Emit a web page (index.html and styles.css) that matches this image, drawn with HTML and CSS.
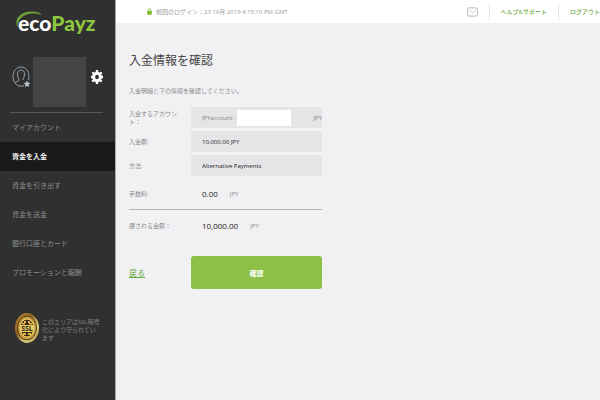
FILE: index.html
```html
<!DOCTYPE html>
<html lang="ja">
<head>
  <meta charset="UTF-8">
  <title>ecoPayz</title>
  <link rel="stylesheet" href="styles.css">
</head>
<body>

  <aside class="sidebar">
    <a href="#" class="logo">
      <svg class="swoosh" viewBox="0 0 32 18" aria-hidden="true">
        <path d="M2.500 17 C-2 7 7 0.500 16 0.500 C21 0.500 25 1.500 27 4 C21 1.500 11 1.500 6 7 C3 10 2 13 2.500 17Z" fill="#6fa332"/>
      </svg>
      <span class="eco">eco</span><span class="payz">Payz</span>
    </a>

    <div class="profile">
      <svg class="user-icon" viewBox="0 0 19 22" fill="none" stroke="#93a0aa" stroke-width="1" aria-hidden="true">
        <path d="M12 19.600 C6 22 1 17 1 10.500 C1 5 4.500 1 9 1 C13.500 1 17 5 17 10.500 C17 12 16.800 13 16.400 14"/>
        <path d="M3.500 17 C4 15 7 15.500 7 14 C7 12.500 5.500 11 5.500 8 C5.500 5.500 7 4 9 4 C11 4 12.500 5.500 12.500 8 C12.500 11 11 12.500 11 14"/>
        <path d="M15 14.500 L16 16.600 L18.400 16.900 L16.700 18.600 L17.100 21 L15 19.900 L12.900 21 L13.300 18.600 L11.600 16.900 L14 16.600Z" fill="#b4c2cc" stroke="none"/>
      </svg>
      <div class="avatar"></div>
      <a href="#" class="settings" aria-label="設定">
        <svg viewBox="0 0 12 14">
          <g fill="#fff">
            <ellipse cx="6" cy="7" rx="4.600" ry="5.400"/>
            <rect x="4.800" y="0" width="2.400" height="14" rx="0.600"/>
            <rect x="0" y="5.600" width="12" height="2.800" rx="0.600"/>
            <rect x="4.800" y="0.400" width="2.400" height="13.200" rx="0.600" transform="rotate(45 6 7)"/>
            <rect x="4.800" y="0.400" width="2.400" height="13.200" rx="0.600" transform="rotate(-45 6 7)"/>
          </g>
          <ellipse cx="6" cy="7" rx="1.900" ry="2.300" fill="#303030"/>
        </svg>
      </a>
    </div>

    <nav class="menu">
      <a href="#">マイアカウント</a>
      <a href="#" class="active">資金を入金</a>
      <a href="#">資金を引き出す</a>
      <a href="#">資金を送金</a>
      <a href="#">銀行口座とカード</a>
      <a href="#">プロモーションと報酬</a>
    </nav>

    <div class="secure">
      <svg class="seal" viewBox="0 0 24 30" aria-hidden="true">
        <defs>
          <linearGradient id="gold" x1="0" y1="0" x2="1" y2="1">
            <stop offset="0" stop-color="#c98a35"/>
            <stop offset="0.400" stop-color="#8a621f"/>
            <stop offset="0.700" stop-color="#eadb83"/>
            <stop offset="1" stop-color="#9b7630"/>
          </linearGradient>
        </defs>
        <ellipse cx="12" cy="15" rx="12" ry="15" fill="url(#gold)"/>
        <ellipse cx="12" cy="15" rx="9.500" ry="12" fill="#c99a3b" stroke="#4b3a1c" stroke-width="1"/>
        <ellipse cx="12" cy="15" rx="7" ry="9" fill="#3a2f1a" stroke="#f3dc77" stroke-width="1"/>
        <path d="M9 8h2v2h-2zM13 8h2v2h-2zM7 10h3v1.500h-3zM14 10h3v1.500h-3zM8 20h3v2h-3zM13 20h3v2h-3z" fill="#f0b53c"/>
        <rect x="5" y="12" width="14" height="7" fill="#e5cb62"/>
        <text x="12" y="18" class="seal-text">SSL</text>
      </svg>
      <p>このエリアはSSL暗号化により守られています</p>
    </div>
  </aside>

  <div class="page">
    <header class="topbar">
      <div class="last-login">
        <svg viewBox="0 0 5 7" aria-hidden="true">
          <path d="M1.200 3.500V2a1.300 1.300 0 0 1 2.600 0v1.500" fill="none" stroke="#8dc049" stroke-width="0.900"/>
          <rect x="0.200" y="3" width="4.600" height="3.800" rx="0.500" fill="#7dbb2f"/>
        </svg>
        <span>前回のログイン：23 10月 2019 4:15:10 PM GMT</span>
      </div>
      <div class="top-links">
        <a href="#" class="mail" aria-label="メール">
          <svg viewBox="0 0 11 10" fill="none" stroke="#b9b9b9">
            <rect x="0.600" y="0.900" width="9.800" height="8.200" rx="1.200"/>
            <path d="M2 3 L5.500 6 L9 3" stroke-width="0.700"/>
          </svg>
        </a>
        <a href="#" class="help">ヘルプ&amp;サポート</a>
        <a href="#" class="logout">ログアウト</a>
      </div>
    </header>

    <main class="content">
      <h1>入金情報を確認</h1>
      <p class="intro">入金明細と下の情報を確認してください。</p>

      <form class="confirm">
        <div class="row">
          <label for="account">入金するアカウント：</label>
          <div class="field account">
            <input type="text" id="account" value="JPYaccount -" readonly>
            <span class="masked"></span>
            <span class="currency">JPY</span>
          </div>
        </div>
        <div class="row">
          <label for="amount">入金額:</label>
          <div class="field">
            <input type="text" id="amount" value="10,000.00 JPY" readonly>
          </div>
        </div>
        <div class="row">
          <label for="method">方法:</label>
          <div class="field">
            <input type="text" id="method" value="Alternative Payments" readonly>
          </div>
        </div>

        <div class="total fee">
          <span class="name">手数料:</span>
          <span class="sum">0.00</span>
          <span class="unit">JPY</span>
        </div>
        <div class="total">
          <span class="name">課される金額：</span>
          <span class="sum">10,000.00</span>
          <span class="unit">JPY</span>
        </div>

        <div class="actions">
          <a href="#" class="back">戻る</a>
          <button type="submit" class="btn">確認</button>
        </div>
      </form>
    </main>
  </div>

</body>
</html>
```

FILE: styles.css
```css
* {
  margin: 0;
  padding: 0;
  box-sizing: border-box;
}

body {
  display: flex;
  min-height: 100vh;
  background: #f1f1f3;
  color: #8c8c8c;
  font-family: "Open Sans", "Noto Sans CJK JP", sans-serif;
  font-size: 6px;
  line-height: 8px;
  overflow-x: hidden;
}

a {
  text-decoration: none;
}

svg {
  display: block;
}

/* sidebar */
.sidebar {
  flex: none;
  width: 116px;
  background: #303030;
  border-right: 1px solid #aaa;
}

.logo {
  position: relative;
  display: flex;
  padding: 8px 0 0 18px;
  height: 57px;
  font-family: Lato, sans-serif;
  font-size: 21px;
  font-weight: 900;
  line-height: 30px;
}

.swoosh {
  position: absolute;
  left: 15px;
  top: 11px;
  width: 32px;
  height: 18px;
}

.eco {
  position: relative;
  color: #fff;
}

.payz {
  color: #8dc63f;
}

.profile {
  display: flex;
  align-items: center;
  margin: 0 12px 0 10px;
  padding: 0 0 5px 2px;
  border-bottom: 1px solid #585858;
}

.user-icon {
  width: 19px;
  height: 22px;
  margin: 0 2px 10px 0;
}

.avatar {
  width: 53px;
  height: 50px;
  background: #444;
}

.settings {
  margin: 0 0 11px 5px;
}

.settings svg {
  width: 12px;
  height: 14px;
}

.menu a {
  display: block;
  padding-left: 12px;
  color: #8c8c8c;
  font-size: 7px;
  line-height: 29px;
}

.menu .active {
  background: #191919;
  color: #eee;
  font-weight: bold;
}

.secure {
  display: flex;
  gap: 3px;
  padding: 26px 14px 0 15px;
  color: #808080;
}

.seal {
  flex: none;
  width: 24px;
  height: 30px;
}

.seal-text {
  font-size: 7px;
  font-weight: bold;
  text-anchor: middle;
  fill: #30291b;
}

.secure p {
  padding-top: 5px;
}

/* top bar */
.page {
  flex: 1;
  min-width: 0;
}

.topbar {
  display: flex;
  justify-content: space-between;
  align-items: center;
  height: 23px;
  padding-left: 31px;
  background: #fff;
}

.last-login {
  display: flex;
  align-items: center;
  gap: 4px;
  color: #999;
}

.last-login svg {
  width: 5px;
  height: 7px;
}

.top-links {
  display: flex;
  align-items: center;
}

.top-links a {
  color: #6fab43;
  font-weight: 500;
}

.mail svg {
  width: 11px;
  height: 10px;
  margin-right: 11px;
}

.help,
.logout {
  padding: 0 11px;
  border-left: 1px solid #e6e6e6;
  line-height: 16px;
}

.top-links .logout {
  padding-right: 0;
}

/* content */
.content {
  padding: 28px 13px;
}

h1 {
  color: #444;
  font-size: 12px;
  font-weight: 400;
  line-height: 20px;
}

.intro {
  margin: 16px 0 12px;
}

.confirm {
  max-width: 193px;
}

.row {
  display: flex;
  align-items: center;
  gap: 14px;
  margin-bottom: 3px;
}

.row label {
  flex: none;
  width: 48px;
}

.field {
  display: flex;
  align-items: center;
  flex: 1;
  min-width: 0;
  height: 21px;
  padding-left: 11px;
  border-radius: 2px;
  background: #e5e5e7;
}

.field input {
  width: 100%;
  border: none;
  outline: none;
  background: none;
  color: #222;
  font: inherit;
}

.account .currency,
.account input {
  color: #808080;
}

.account input {
  width: 35px;
}

.masked {
  width: 54px;
  height: 16px;
  background: #fff;
}

.currency {
  margin-left: auto;
}

.total {
  display: flex;
  align-items: center;
  height: 31px;
}

.fee {
  border-bottom: 1px solid #b5b5b7;
}

.name {
  width: 73px;
}

.sum {
  color: #222;
  font-size: 8px;
}

.unit {
  margin-left: 12px;
}

.actions {
  display: flex;
  align-items: center;
  justify-content: space-between;
  margin-top: 15px;
}

.back {
  color: #69a842;
  font-size: 8px;
  line-height: 12px;
  text-decoration: underline;
}

.btn {
  width: 131px;
  height: 33px;
  border: none;
  border-radius: 3px;
  background: #8cc047;
  color: #fff;
  font-family: inherit;
  font-size: 7px;
  font-weight: bold;
  cursor: pointer;
}
```
